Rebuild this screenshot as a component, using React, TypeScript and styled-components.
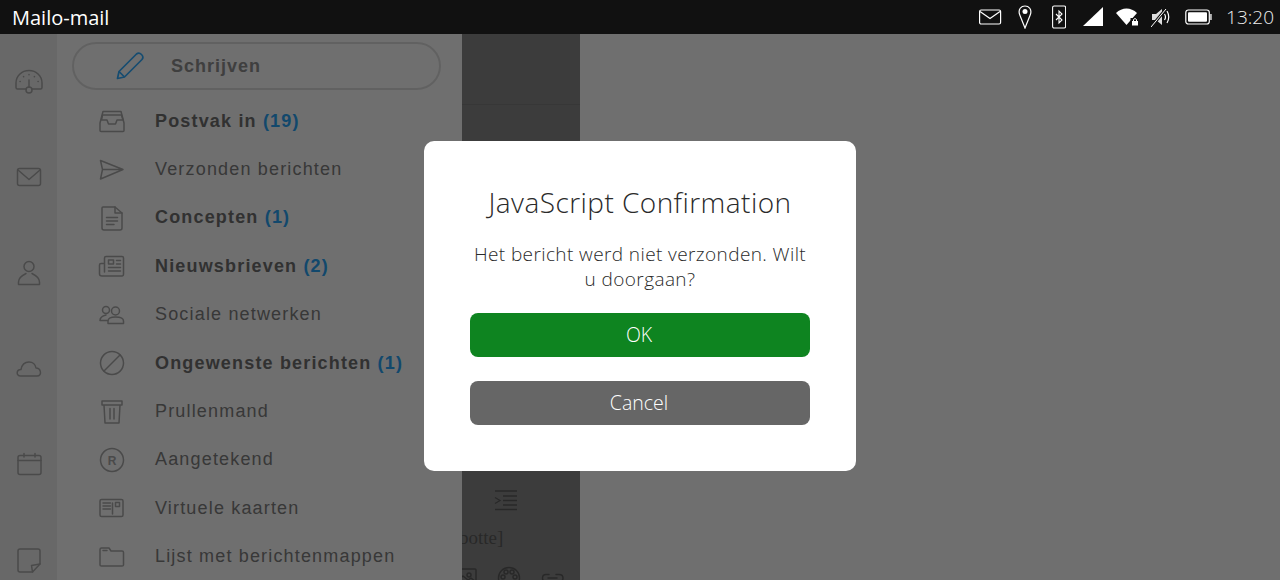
import React from "react";
import styled, { createGlobalStyle } from "styled-components";

const GlobalStyle = createGlobalStyle`
  html, body {
    margin: 0;
    padding: 0;
    height: 100%;
    overflow: hidden;
  }
  body {
    font-family: "Liberation Sans", Arial, sans-serif;
  }
`;

const Screen = styled.div`
  width: 1280px;
  height: 580px;
  display: flex;
  flex-direction: column;
  overflow: hidden;
`;

const StatusBar = styled.div`
  height: 34px;
  flex: none;
  background: #111111;
  color: #ffffff;
  display: flex;
  align-items: center;
  justify-content: space-between;
  padding: 0 6px 0 12px;
`;

const AppName = styled.div`
  font-family: "Open Sans", sans-serif;
  font-size: 20px;
  font-weight: 500;
`;

const Indicators = styled.div`
  display: flex;
  align-items: center;
`;

const Clock = styled.div`
  font-family: "Open Sans", sans-serif;
  font-weight: 300;
  font-size: 19px;
  margin-left: 14px;
  color: #eeeeee;
`;

const Main = styled.div`
  position: relative;
  flex: 1;
  display: flex;
  min-height: 0;
  background: #f6f6f6;
`;

const Rail = styled.div`
  width: 57px;
  flex: none;
  background: #e7e7e7;
  display: grid;
  grid-auto-rows: 95.6px;
  justify-items: center;
  align-items: center;
`;

const RailIcon = styled.div`
  color: #a4a4a4;
  display: flex;
`;

const Sidebar = styled.div`
  width: 405px;
  flex: none;
  background: #f6f6f6;
  padding-top: 8px;
  box-sizing: border-box;
`;

const Compose = styled.div`
  width: 369px;
  height: 48px;
  box-sizing: border-box;
  margin-left: 15px;
  border: 2px solid #d8d8d8;
  border-radius: 24px;
  display: flex;
  align-items: center;
  padding-left: 41px;
`;

const ComposeLabel = styled.span`
  margin: 1px 0 0 26px;
  font-size: 18px;
  font-weight: 700;
  letter-spacing: 1px;
  color: #8c8c8c;
`;

const FolderList = styled.div`
  margin-top: 7px;
  display: grid;
  grid-auto-rows: 48.4px;
`;

const Folder = styled.div`
  display: flex;
  align-items: center;
  padding-left: 35px;
`;

const FolderIcon = styled.div`
  width: 40px;
  display: flex;
  justify-content: center;
  color: #a4a4a4;
`;

const FolderName = styled.span<{ $bold?: boolean }>`
  margin-left: 23px;
  font-size: 18px;
  letter-spacing: 1.17px;
  white-space: nowrap;
  font-weight: ${(p) => (p.$bold ? 700 : 400)};
  color: ${(p) => (p.$bold ? "#6e6e6e" : "#7c7c7c")};
`;

const Count = styled.span`
  color: #28a0f0;
`;

const Editor = styled.div`
  width: 118px;
  flex: none;
  background: #868686;
  color: #5a5a5a;
  display: flex;
  flex-direction: column;
  overflow: hidden;
`;

const EditorHeader = styled.div`
  height: 70px;
  flex: none;
  border-bottom: 1px solid #7a7a7a;
`;

const EditorBody = styled.div`
  flex: 1;
  display: flex;
  flex-direction: column;
  justify-content: flex-end;
  height: 0;
`;

const IndentButton = styled.div`
  display: flex;
  justify-content: center;
  padding-right: 31px;
`;

const Snippet = styled.div`
  margin: 14px 0 0 -3px;
  height: 24px;
  font-family: "Liberation Serif", serif;
  font-size: 19px;
  line-height: 24px;
  white-space: nowrap;
`;

const Toolbar = styled.div`
  display: flex;
  align-items: flex-start;
  height: 14px;
  margin-top: 16px;
  margin-left: -8px;
  gap: 19px;
`;

const Page = styled.div`
  flex: 1;
`;

const Backdrop = styled.div`
  position: absolute;
  inset: 0;
  background: rgba(0, 0, 0, 0.55);
  display: flex;
  align-items: center;
  justify-content: center;
  padding-bottom: 2px;
  box-sizing: border-box;
`;

const Dialog = styled.div`
  width: 432px;
  height: 330px;
  box-sizing: border-box;
  padding: 44px 46px 0;
  background: #ffffff;
  border-radius: 10px;
  font-family: "Open Sans", sans-serif;
  font-weight: 300;
  text-align: center;
  color: #2a2a2a;
`;

const Title = styled.div`
  font-size: 28px;
  line-height: 35px;
  letter-spacing: 0.45px;
`;

const Message = styled.div`
  margin-top: 22px;
  font-size: 19px;
  line-height: 25px;
  letter-spacing: 0.4px;
  height: 51px;
`;

const DialogButton = styled.div<{ $primary?: boolean }>`
  height: 44px;
  margin-top: ${(p) => (p.$primary ? "20px" : "24px")};
  padding: 0 2px 2px 0;
  box-sizing: border-box;
  border-radius: 8px;
  display: flex;
  align-items: center;
  justify-content: center;
  color: #ffffff;
  font-size: 19.5px;
  background: ${(p) => (p.$primary ? "#0e8420" : "#666666")};
`;

const Line = {
  fill: "none",
  stroke: "currentColor",
  strokeWidth: 1.5,
  strokeLinecap: "round" as const,
  strokeLinejoin: "round" as const,
};

const Ico = ({ w = 28, h = 28, children }: any) => (
  <svg width={w} height={h} viewBox={`0 0 ${w} ${h}`} {...Line}>
    {children}
  </svg>
);

const Gauge = () => (
  <Ico>
    <path d="M11 21H2.500Q1 21 1 19.500V15C1 8 6.500 2.600 14 2.600S27 8 27 15V19.500Q27 21 25.500 21H17" />
    <circle cx="14" cy="22" r="3" />
    <path d="M14 19V12" />
    <path d="M14 6.500v.2M8.500 8.500l.2.2M19.500 8.500l-.2.2M5 13.500h.2M23 13.500h.2" />
  </Ico>
);
const Envelope = () => (
  <Ico h={22}>
    <rect x="2.500" y="2.500" width="23" height="17" rx="2" />
    <path d="M3 4l11 9.500L25 4" />
  </Ico>
);
const Person = () => (
  <Ico>
    <circle cx="14" cy="7.500" r="5" />
    <path d="M3.500 25.500V23C3.500 18 8 16 11 14.500M24.500 25.500V23C24.500 18 20 16 17 14.500M3.500 25.500H24.500" />
  </Ico>
);
const Cloud = () => (
  <Ico h={20}>
    <path d="M7 17H5.500C1 17 1 10.500 6 10.500 7 5 10.500 3 14 3 18 3 20.500 6 21 9 26 9 27.500 17 22 17Z" />
  </Ico>
);
const Calendar = () => (
  <Ico h={24}>
    <rect x="3" y="3.500" width="23" height="19" rx="2" />
    <path d="M3 8.500H26M9 1.500V5M20 1.500V5" />
  </Ico>
);
const Note = () => (
  <Ico>
    <path d="M5 3H23Q25 3 25 5V18L17.500 26H5Q3 26 3 24V5Q3 3 5 3Z" />
    <path d="M17.500 26L16.500 19.500 25 18" />
  </Ico>
);

const Inbox = () => (
  <Ico h={24}>
    <path d="M2 14V21.500Q2 22.500 3 22.500H25Q26 22.500 26 21.500V14L23 2.500H5L2 14Z" />
    <path d="M4.500 6H23.500L25 11H19L17.500 15H10.500L9 11H3.500Z" />
  </Ico>
);
const Send = () => (
  <Ico h={24}>
    <path d="M2.500 2.500L25 11.500 2.500 21 4.500 11.500ZM4.500 11.500H25" />
  </Ico>
);
const Doc = () => (
  <Ico h={26}>
    <path d="M5 2H17L24 8V23Q24 25 22 25H6Q4 25 4 23V3Q4 2 5 2Z" />
    <path d="M17 2V8H24M8.500 12.500H19.500M8.500 16H19.500M8.500 19.500H16" />
  </Ico>
);
const News = () => (
  <Ico h={24}>
    <path d="M6.500 18V4Q6.500 2.500 8 2.500H24Q25.500 2.500 25.500 4V20Q25.500 22 24 22H4Q1.500 22 1.500 20V11Q1.500 9.500 3 9.500H6.500" />
    <rect x="10.500" y="6" width="5" height="4" />
    <path d="M18.500 6.500H22.500M18.500 10H22.500M10.500 13.500H22.500M10.500 17H22.500" />
  </Ico>
);
const People = () => (
  <Ico h={20}>
    <circle cx="8" cy="5" r="3.500" />
    <circle cx="17.500" cy="6" r="4" />
    <path d="M2 15.500C2 12 4 11 8 10M10 18.500V16C10 12.500 14 12 17.500 12S25.500 12.500 25.500 16V18.500ZM2 15.500H9" />
  </Ico>
);
const Ban = () => (
  <Ico h={26}>
    <circle cx="14" cy="13" r="11.500" />
    <path d="M6 21L22 5" />
  </Ico>
);
const Trash = () => (
  <Ico w={24} h={26}>
    <path d="M2 2H22V6H2ZM4 6L5 24H19L20 6M10 9.500V20M14 9.500V20" />
  </Ico>
);
const RegisteredMark = styled.text`
  font-family: "Liberation Sans", sans-serif;
  font-size: 12px;
  font-weight: 700;
  fill: currentColor;
  stroke: none;
  text-anchor: middle;
`;
const Registered = () => (
  <Ico h={26}>
    <circle cx="14" cy="13" r="11.500" />
    <RegisteredMark x="14" y="17.500">R</RegisteredMark>
  </Ico>
);
const CardIcon = () => (
  <Ico h={20}>
    <rect x="2" y="1.500" width="23" height="17" rx="1.500" />
    <path d="M5 5H12.500M5 8H12.500M5 11H12.500M14.500 5V16" />
    <rect x="17.500" y="4.500" width="4" height="4" />
  </Ico>
);
const FolderGlyph = () => (
  <Ico h={22}>
    <path d="M2 3.500Q2 2 3.500 2H11L13 5H24Q25.500 5 25.500 6.500V19Q25.500 20 24 20H3.500Q2 20 2 19Z" />
    <path d="M5 4.500H9" />
  </Ico>
);
const Pencil = () => (
  <svg width="30" height="30" viewBox="0 0 30 30" fill="none" stroke="#30a8f8" strokeWidth="1.700" strokeLinejoin="round">
    <path d="M2.500 27.500L4 20.500 21.500 3Q24 1 26.500 3.500T27 8.500L9.500 26Z" />
    <path d="M4 20.500L9.500 26" />
  </svg>
);

const IndentIcon = () => (
  <svg width="26" height="24" viewBox="0 0 26 24" fill="none" stroke="currentColor" strokeWidth="1.300">
    <path d="M2 3H24M10 8H24M10 12.500H24M10 17H24M2 21.500H24M2 9.500L7 12.500 2 15.500" />
  </svg>
);
const ImageIcon = () => (
  <Ico w={24} h={24}>
    <rect x="3" y="3" width="19" height="18" rx="1" />
    <circle cx="15" cy="9" r="2" />
    <path d="M3 15L9 10 14 14 17 12 22 16" />
  </Ico>
);
const ReelIcon = () => (
  <Ico w={24} h={24}>
    <circle cx="12" cy="12" r="10.500" />
    <circle cx="9" cy="6" r="2" />
    <circle cx="15" cy="6" r="2" />
    <circle cx="6" cy="11" r="2" />
    <circle cx="18" cy="11" r="2" />
  </Ico>
);
const LinkIcon = () => (
  <Ico w={24} h={24}>
    <path d="M9 8.500H6Q2.500 8.500 2.500 12T6 15.500H9M16 8.500H19Q23 8.500 23 12T19 15.500H16M8 12H17" />
  </Ico>
);

const MailInd = () => (
  <svg width="24" height="16" viewBox="0 0 24 16" fill="none" stroke="#fff" strokeWidth="1.200">
    <rect x="1.600" y="1" width="21" height="14" rx="1.500" />
    <path d="M2 2.500L12 9.500 22 2.500" />
  </svg>
);
const PinInd = () => (
  <svg width="14" height="24" viewBox="0 0 14 24" fill="none" stroke="#fff" strokeWidth="1.200" style={{ marginLeft: 16 }}>
    <path d="M7 23L1.800 10C-.5 4 3.500 1 7 1S14.500 4 12.200 10Z" />
    <circle cx="7" cy="6.500" r="2.500" fill="#fff" stroke="none" />
  </svg>
);
const BluetoothInd = () => (
  <svg width="14" height="24" viewBox="0 0 14 24" fill="none" stroke="#fff" strokeWidth="1.100" style={{ marginLeft: 20 }}>
    <rect x=".6" y="1" width="13" height="22" rx="1.500" />
    <path d="M4 9L10 15 7 18V6L10 9 4 15" />
  </svg>
);
const SignalInd = () => (
  <svg width="20" height="20" viewBox="0 0 20 20" style={{ marginLeft: 17 }}>
    <path d="M20 0V19H0Z" fill="#fff" />
  </svg>
);
const WifiInd = () => (
  <svg width="23" height="18" viewBox="0 0 23 18" style={{ marginLeft: 13 }}>
    <path d="M0 5C6 -1 15 -1 21 5L10.500 17Z" fill="#fff" />
    <rect x="14.500" y="10" width="8.500" height="8" fill="#111" />
    <rect x="16" y="13" width="6" height="4.500" fill="#fff" />
    <path d="M17.500 13V11.500Q19 9.500 20.500 11.500V13" fill="none" stroke="#fff" />
  </svg>
);
const MuteInd = () => (
  <svg width="20" height="20" viewBox="0 0 20 20" fill="none" stroke="#fff" style={{ marginLeft: 12 }}>
    <path d="M1 7H5L11 2V18L5 13H1Z" fill="#ddd" stroke="none" />
    <path d="M0 20L15 2" stroke="#111" strokeWidth="3" />
    <path d="M0 20L15 2" strokeWidth="1" />
    <path d="M13.500 7Q15.500 10 13.500 13M16 4Q19.500 10 16 16" strokeWidth="1.200" />
  </svg>
);
const BatteryInd = () => (
  <svg width="27" height="16" viewBox="0 0 27 16" fill="none" style={{ marginLeft: 14 }}>
    <rect x=".8" y="1" width="23.500" height="14" rx="2.500" stroke="#fff" strokeWidth="1.200" />
    <rect x="3" y="3.200" width="19" height="9.600" rx="1" fill="#fff" />
    <rect x="25.200" y="5" width="1.500" height="6" fill="#ddd" />
  </svg>
);

const railIcons = [Gauge, Envelope, Person, Cloud, Calendar, Note];

const folders = [
  { icon: Inbox, name: "Postvak in", count: 19 },
  { icon: Send, name: "Verzonden berichten" },
  { icon: Doc, name: "Concepten", count: 1 },
  { icon: News, name: "Nieuwsbrieven", count: 2 },
  { icon: People, name: "Sociale netwerken" },
  { icon: Ban, name: "Ongewenste berichten", count: 1 },
  { icon: Trash, name: "Prullenmand" },
  { icon: Registered, name: "Aangetekend" },
  { icon: CardIcon, name: "Virtuele kaarten" },
  { icon: FolderGlyph, name: "Lijst met berichtenmappen" },
];

export default function App() {
  return (
    <Screen>
      <GlobalStyle />
      <StatusBar>
        <AppName>Mailo-mail</AppName>
        <Indicators>
          <MailInd />
          <PinInd />
          <BluetoothInd />
          <SignalInd />
          <WifiInd />
          <MuteInd />
          <BatteryInd />
          <Clock>13:20</Clock>
        </Indicators>
      </StatusBar>
      <Main>
        <Rail>
          {railIcons.map((Icon, i) => (
            <RailIcon key={i}>
              <Icon />
            </RailIcon>
          ))}
        </Rail>
        <Sidebar>
          <Compose>
            <Pencil />
            <ComposeLabel>Schrijven</ComposeLabel>
          </Compose>
          <FolderList>
            {folders.map((f) => (
              <Folder key={f.name}>
                <FolderIcon>
                  <f.icon />
                </FolderIcon>
                <FolderName $bold={f.count !== undefined}>
                  {f.name}
                  {f.count !== undefined && <Count> ({f.count})</Count>}
                </FolderName>
              </Folder>
            ))}
          </FolderList>
        </Sidebar>
        <Editor>
          <EditorHeader />
          <EditorBody>
            <IndentButton>
              <IndentIcon />
            </IndentButton>
            <Snippet>botte]</Snippet>
            <Toolbar>
              <ImageIcon />
              <ReelIcon />
              <LinkIcon />
            </Toolbar>
          </EditorBody>
        </Editor>
        <Page />
        <Backdrop>
          <Dialog>
            <Title>JavaScript Confirmation</Title>
            <Message>Het bericht werd niet verzonden. Wilt u doorgaan?</Message>
            <DialogButton $primary>OK</DialogButton>
            <DialogButton>Cancel</DialogButton>
          </Dialog>
        </Backdrop>
      </Main>
    </Screen>
  );
}
